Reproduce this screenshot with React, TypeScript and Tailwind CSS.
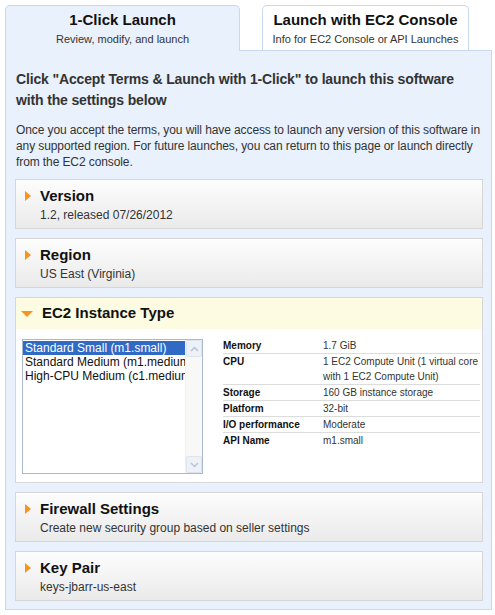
import React from 'react';

function RightArrow() {
  return <div className="w-0 h-0 border-y-[5px] border-y-transparent border-l-[6px] border-l-[#f7931e]" />;
}

function Section({ title, sub }: { title: string; sub: string }) {
  return (
    <div className="mt-[9px] border border-[#d6d6d6] bg-gradient-to-b from-[#fdfdfd] to-[#eaeaea] pt-[6px] pb-[4px] pl-[9px]">
      <div className="flex items-center h-[20px]">
        <RightArrow />
        <span className="ml-[9px] text-[15px] font-bold text-[#111]">{title}</span>
      </div>
      <div className="pl-[15px] text-[12px] leading-[18px] text-[#333]">{sub}</div>
    </div>
  );
}

const specs: { label: string; value: React.ReactNode }[] = [
  { label: 'Memory', value: '1.7 GiB' },
  {
    label: 'CPU',
    value: (
      <>
        1 EC2 Compute Unit (1 virtual core
        <br />
        with 1 EC2 Compute Unit)
      </>
    ),
  },
  { label: 'Storage', value: '160 GB instance storage' },
  { label: 'Platform', value: '32-bit' },
  { label: 'I/O performance', value: 'Moderate' },
  { label: 'API Name', value: 'm1.small' },
];

const instances = ['Standard Small (m1.small)', 'Standard Medium (m1.medium)', 'High-CPU Medium (c1.medium)'];

function Chevron({ up }: { up?: boolean }) {
  return (
    <svg width="9" height="6" viewBox="0 0 9 6">
      <path d={up ? 'M1 5 L4.5 1.5 L8 5' : 'M1 1 L4.5 4.5 L8 1'} fill="none" stroke="#b9c3d3" strokeWidth="1.5" />
    </svg>
  );
}

export default function App() {
  return (
    <div className="w-[495px] h-[615px] bg-white font-['Liberation_Sans',Arial,sans-serif] text-[#333]">
      <div className="flex items-end pl-[5px] pt-[5px]">
        <div className="relative z-10 -mb-px w-[235px] h-[46px] border border-b-0 border-[#c5d9f1] rounded-t-[5px] bg-[#e9f1fc] flex flex-col items-center pt-[4px]">
          <div className="text-[15px] leading-[20px] font-bold text-[#111]">1-Click Launch</div>
          <div className="text-[11px] leading-[16px] text-[#333] mt-[1px]">Review, modify, and launch</div>
        </div>
        <div className="ml-[22px] w-[207px] h-[45px] border border-b-0 border-[#c5d9f1] rounded-t-[5px] bg-white flex flex-col items-center pt-[4px]">
          <div className="text-[15px] leading-[20px] font-bold text-[#111]">Launch with EC2 Console</div>
          <div className="text-[11px] leading-[16px] text-[#333] mt-[1px]">Info for EC2 Console or API Launches</div>
        </div>
      </div>

      <div className="ml-[5px] w-[487px] border border-[#c5d9f1] bg-[#e9f1fc] pt-[18px] pl-[9px] pr-[8px] pb-[8px]">
        <h1 className="pl-px text-[14px] tracking-[-0.15px] leading-[21px] font-bold text-[#333]">
          Click "Accept Terms &amp; Launch with 1-Click" to launch this software with the settings below
        </h1>
        <p className="mt-[11px] pl-px text-[12px] tracking-[-0.1px] leading-[16px] text-[#333]">
          Once you accept the terms, you will have access to launch any version of this software in any supported
          region. For future launches, you can return to this page or launch directly from the EC2 console.
        </p>

        <Section title="Version" sub="1.2, released 07/26/2012" />
        <Section title="Region" sub="US East (Virginia)" />

        <div className="mt-[9px] border border-[#d6d6d6] bg-white">
          <div className="h-[31px] bg-[#fdfbe1] flex items-center pl-[5px]">
            <div className="w-0 h-0 border-x-[6px] border-x-transparent border-t-[6px] border-t-[#f7931e]" />
            <span className="ml-[9px] text-[15px] font-bold text-[#111]">EC2 Instance Type</span>
          </div>
          <div className="flex items-start pt-[9px] pl-[6px] pb-[8px]">
            <div className="mt-px w-[181px] h-[135px] border border-[#a9b8cc] bg-white flex">
              <div className="flex-1 overflow-hidden pt-px">
                {instances.map((name, i) => (
                  <div
                    key={name}
                    className={
                      i === 0
                        ? 'h-[14px] leading-[14px] pl-[2px] text-[12px] whitespace-nowrap bg-[#316ac5] text-white'
                        : 'h-[14px] leading-[14px] pl-[2px] text-[12px] whitespace-nowrap text-[#111]'
                    }
                  >
                    {name}
                  </div>
                ))}
              </div>
              <div className="w-[17px] flex flex-col bg-[#f8f8f6] border-l border-[#eef0f3]">
                <div className="h-[17px] flex items-center justify-center bg-[#eef2f8] border border-[#dde4ee] rounded-[2px]">
                  <Chevron up />
                </div>
                <div className="flex-1" />
                <div className="h-[17px] flex items-center justify-center bg-[#eef2f8] border border-[#dde4ee] rounded-[2px]">
                  <Chevron />
                </div>
              </div>
            </div>
            <div className="ml-[20px] mr-[2px] flex-1">
              {specs.map((s, i) => (
                <div
                  key={s.label}
                  className={
                    i < specs.length - 1
                      ? 'flex text-[10px] leading-[15px] border-b border-[#dcdcdc]'
                      : 'flex text-[10px] leading-[15px]'
                  }
                >
                  <div className="w-[100px] shrink-0 font-bold text-[#111]">{s.label}</div>
                  <div className="text-[#333]">{s.value}</div>
                </div>
              ))}
            </div>
          </div>
        </div>

        <Section title="Firewall Settings" sub="Create new security group based on seller settings" />
        <Section title="Key Pair" sub="keys-jbarr-us-east" />
      </div>
    </div>
  );
}
